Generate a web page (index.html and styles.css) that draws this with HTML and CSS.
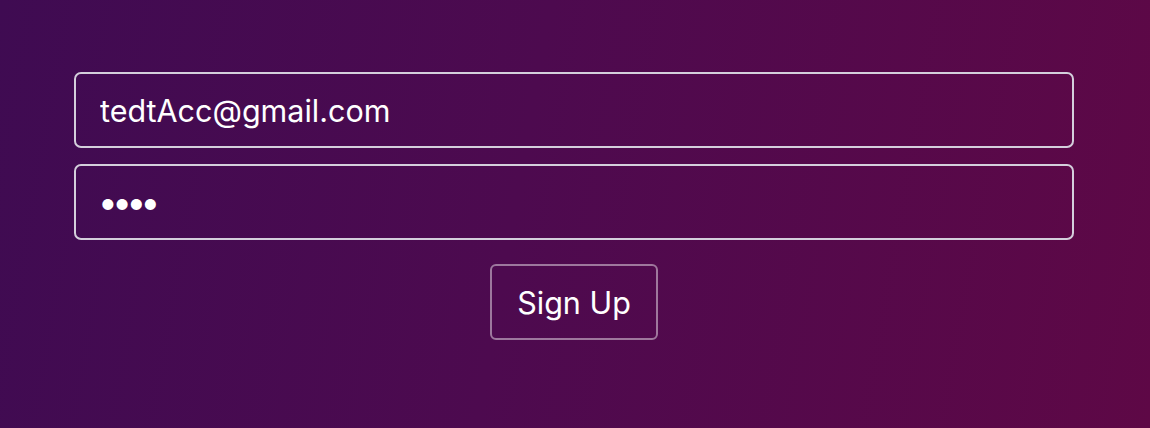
FILE: index.html
```html
<!DOCTYPE html>
<html>
<head>
<meta charset="utf-8">
<link rel="stylesheet" href="styles.css">
</head>
<body>
<form class="form">
  <input class="field" type="email" value="tedtAcc@gmail.com">
  <input class="field field-pass" type="password" value="1234">
  <button class="btn" type="button">Sign Up</button>
</form>
</body>
</html>
```
FILE: styles.css
```css
html, body {
  margin: 0;
  height: 100%;
}
body {
  box-sizing: border-box;
  padding-right: 2px;
  background: linear-gradient(100deg, #3f0b52 0%, #4d0a4f 45%, #5e0846 100%);
  font-family: Inter, "Noto Sans", sans-serif;
}
.form {
  width: 1000px;
  margin: 0 auto;
  padding-top: 72px;
  display: flex;
  flex-direction: column;
  align-items: center;
}
.field {
  box-sizing: border-box;
  width: 1000px;
  height: 76px;
  margin-bottom: 16px;
  padding: 0 24px;
  border: 2px solid #d4cfdc;
  border-radius: 7px;
  background: transparent;
  color: #fff;
  font-family: inherit;
  font-size: 30.5px;
  outline: none;
}
.field-pass {
  margin-bottom: 24px;
  padding-left: 22px;
  font-size: 35px;
  letter-spacing: -5.5px;
}
.btn {
  box-sizing: border-box;
  width: 168px;
  height: 76px;
  border: 2px solid rgba(255, 255, 255, 0.45);
  border-radius: 6px;
  background: transparent;
  color: #fff;
  font-family: inherit;
  font-size: 30.5px;
  padding: 0;
}
```
